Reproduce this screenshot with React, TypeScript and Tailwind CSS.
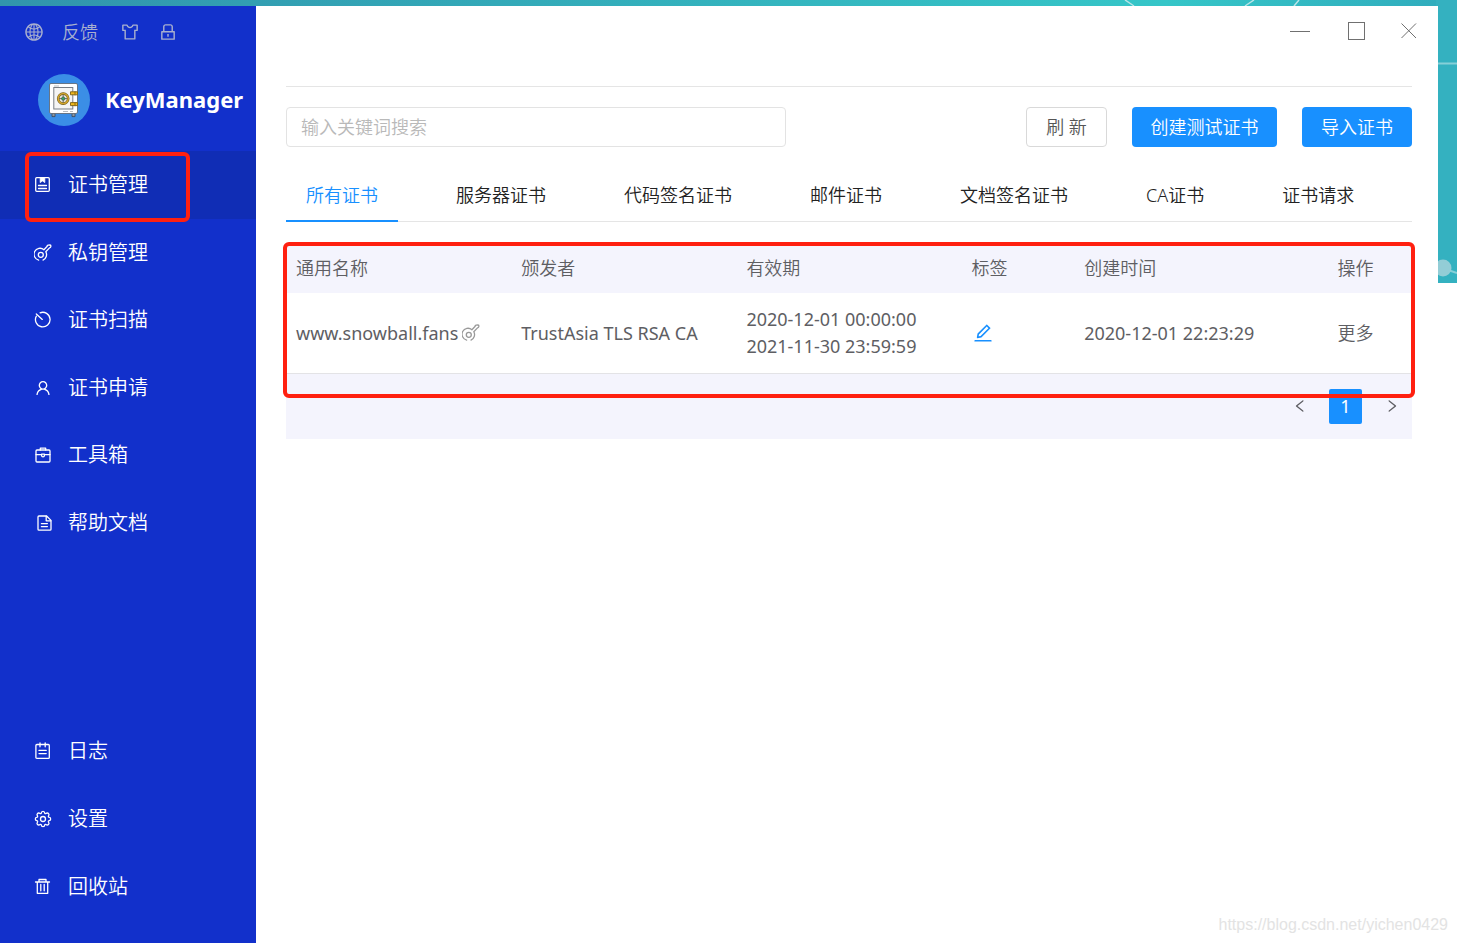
import React from "react";
import {
  AiOutlineEdit,
  AiOutlineGlobal,
  AiOutlineLeft,
  AiOutlineLock,
  AiOutlineRight,
  AiOutlineSkin,
  AiOutlineUser,
} from "react-icons/ai";

type IconProps = { className?: string };

function Svg({ className, children }: IconProps & { children: React.ReactNode }) {
  return (
    <svg
      viewBox="0 0 18 18"
      fill="none"
      stroke="currentColor"
      strokeWidth="1.3"
      strokeLinecap="round"
      strokeLinejoin="round"
      className={className}
      aria-hidden="true"
    >
      {children}
    </svg>
  );
}

function CertIcon({ className }: IconProps) {
  return (
    <Svg className={className}>
      <rect x="1.7" y="1.7" width="13.6" height="13.6" rx="1" />
      <path d="M6.2 2v4.6L8.5 4.9l2.3 1.7V2z" fill="currentColor" strokeWidth="0.8" />
      <path d="M4.5 9.5h8M4.5 12.5h8" />
    </Svg>
  );
}

function KeyIcon({ className }: IconProps) {
  return (
    <Svg className={className}>
      <path d="M4.6 16.1A6 6 0 1 1 9.900 5.700L13.200 2.300Q13 1.300 14.200 1.100L16 1Q17 1.100 16.900 2.300Q16.800 3.600 15.500 3.900L11.800 7.700A6 6 0 0 1 9 16.100" />
      <circle cx="6.800" cy="10.800" r="2.500" />
    </Svg>
  );
}

function ScanIcon({ className }: IconProps) {
  return (
    <Svg className={className}>
      <path d="M6.1 1.8A7.3 7.3 0 1 1 2.3 5.2" />
      <path d="M2.3 3L8.3 8.4" />
    </Svg>
  );
}

function ToolboxIcon({ className }: IconProps) {
  return (
    <Svg className={className}>
      <rect x="2" y="4" width="14" height="12" rx="1" />
      <path d="M6.3 4V2.2h5.4V4M2 8.6h5.6M10.4 8.6H16M7.6 8.2v1.2a1.4 1.4 0 0 0 2.8 0V8.2z" />
    </Svg>
  );
}

function DocIcon({ className }: IconProps) {
  return (
    <Svg className={className}>
      <path d="M5 2h7.6L17 6.4V15.200a1 1 0 0 1-1 1H5a1 1 0 0 1-1-1V3a1 1 0 0 1 1-1z" />
      <path d="M12.2 2.2V6.8H16.8M7.4 9.6h6M7.4 12.6h6" />
    </Svg>
  );
}

function LogIcon({ className }: IconProps) {
  return (
    <Svg className={className}>
      <rect x="1.9" y="2.500" width="13.4" height="13.900" rx="1" />
      <path d="M6 0.800v4M11.2 0.800v4M5 8.400h7.2M5 11.600h7.2" />
    </Svg>
  );
}

function GearIcon({ className }: IconProps) {
  return (
    <Svg className={className}>
      <path d="M7.200 3.300Q7.400 1.300 9 1.300T10.800 3.300Q11.100 3.800 11.800 3.600Q13.400 2.400 14.500 3.500T14.400 6.200Q14.200 6.900 14.700 7.200Q16.700 7.400 16.700 9T14.700 10.800Q14.200 11.100 14.400 11.800Q15.600 13.400 14.500 14.500T11.800 14.400Q11.100 14.200 10.800 14.700Q10.600 16.700 9 16.700T7.200 14.700Q6.900 14.200 6.200 14.400Q4.600 15.600 3.500 14.500T3.600 11.800Q3.800 11.100 3.300 10.800Q1.300 10.600 1.300 9T3.300 7.200Q3.800 6.900 3.600 6.200Q2.400 4.600 3.500 3.500T6.200 3.600Q6.900 3.800 7.200 3.300z" />
      <circle cx="9" cy="9" r="2.500" />
    </Svg>
  );
}

function TrashIcon({ className }: IconProps) {
  return (
    <Svg className={className}>
      <path d="M1.500 4h14M5 3.800V1.500h7v2.300M3.300 4.200V15.300h10.400V4.200M6.800 6.400v6.400M10.200 6.400v6.400" />
    </Svg>
  );
}

function SafeLogo() {
  return (
    <svg viewBox="0 0 52 52" className="size-[52px] shrink-0" aria-hidden="true">
      <circle cx="26" cy="26" r="26" fill="#3b8ee6" />
      <path d="M14 39h3v3.6h-3zM34 39h3v3.6h-3z" fill="#8b98a5" stroke="#3d4550" strokeWidth="0.8" />
      <rect x="11.5" y="9.5" width="28" height="30" rx="1.5" fill="#fff" stroke="#59616b" strokeWidth="0.8" />
      <rect x="15.8" y="13.5" width="19" height="21.5" fill="#f5f5f5" stroke="#777d84" strokeWidth="1" />
      <path d="M16 12h5M25 37.5h5M32 37.5h3" stroke="#b8bcc0" strokeWidth="1" />
      <circle cx="25.2" cy="24.6" r="5" fill="#e4e4dc" stroke="#6e5a1c" strokeWidth="2.6" />
      <circle cx="25.2" cy="24.6" r="5" fill="none" stroke="#d2a52e" strokeWidth="1.5" />
      <path d="M25.2 20.5v8.2M21 24.6h8.4" stroke="#65645b" strokeWidth="0.9" />
      <circle cx="25.2" cy="24.6" r="1.7" fill="#35a867" stroke="#39453c" strokeWidth="0.6" />
      <path
        d="M32.5 17.8h7v3h-7zM32.5 28.6h7v3h-7z"
        fill="#f0b91c"
        stroke="#7b6015"
        strokeWidth="0.9"
      />
      <path d="M37 17.2v4.2M37 28v4.2" stroke="#8d6d12" strokeWidth="1" />
    </svg>
  );
}

type Item = { label: string; icon: React.ComponentType<IconProps>; active?: boolean };

const mainItems: Item[] = [
  { label: "证书管理", icon: CertIcon, active: true },
  { label: "私钥管理", icon: KeyIcon },
  { label: "证书扫描", icon: ScanIcon },
  { label: "证书申请", icon: AiOutlineUser },
  { label: "工具箱", icon: ToolboxIcon },
  { label: "帮助文档", icon: DocIcon },
];

const footItems: Item[] = [
  { label: "日志", icon: LogIcon },
  { label: "设置", icon: GearIcon },
  { label: "回收站", icon: TrashIcon },
];

function NavItem({ label, icon: Icon, active }: Item) {
  return (
    <a
      href="#"
      className={
        "relative flex items-center gap-4 pt-px pl-[34px] text-xl font-[350] text-white " +
        (active ? "bg-[#102db5]" : "")
      }
    >
      <Icon className="size-[18px] shrink-0" />
      {label}
      {active && (
        <span className="pointer-events-none absolute top-px left-[25px] h-[70px] w-[165px] rounded-md border-4 border-[#ff2010]" />
      )}
    </a>
  );
}

function Sidebar() {
  return (
    <aside className="flex w-64 shrink-0 flex-col bg-[#1230cb]">
      <div className="flex h-[52px] items-center pl-6 text-lg font-[350] text-[#a9b0cf]">
        <button aria-label="语言" className="mr-[18px]">
          <AiOutlineGlobal className="size-5" />
        </button>
        <button className="mr-[22px]">反馈</button>
        <button aria-label="皮肤" className="mr-[18px]">
          <AiOutlineSkin className="size-5" />
        </button>
        <button aria-label="锁定">
          <AiOutlineLock className="size-5" />
        </button>
      </div>
      <div className="flex h-[93px] items-start gap-[15px] pt-4 pl-[38px]">
        <SafeLogo />
        <h1 className="text-[22px] leading-[50px] font-bold text-white">KeyManager</h1>
      </div>
      <nav className="grid h-[405px] auto-rows-fr">
        {mainItems.map((i) => (
          <NavItem key={i.label} {...i} />
        ))}
      </nav>
      <nav className="mt-auto mb-[23px] grid h-[203px] auto-rows-fr">
        {footItems.map((i) => (
          <NavItem key={i.label} {...i} />
        ))}
      </nav>
    </aside>
  );
}

const tabs = ["所有证书", "服务器证书", "代码签名证书", "邮件证书", "文档签名证书", "CA证书", "证书请求"];

function Backdrop() {
  return (
    <div className="absolute inset-x-0 top-0 h-[283px] bg-linear-to-r from-[#3194ac] via-[#35c6c8] via-80% to-[#30abbc]">
      <svg className="absolute top-0 right-0 h-[283px] w-[457px]" viewBox="0 0 457 283" aria-hidden="true">
        <rect x="436" width="21" height="283" fill="#34b1c0" />
        <path d="M125 0l9 6M254 0l-9 6M299 0l-5 6" stroke="#b9e4e7" strokeWidth="1.5" />
        <path d="M436 63.5H457M448 270l9 3" stroke="#86d0d8" strokeWidth="2" />
        <circle cx="443" cy="268" r="8.5" fill="#93cdd6" />
      </svg>
    </div>
  );
}

function WindowControls() {
  return (
    <div className="flex h-[50px] items-center justify-end gap-9 pr-5 text-[#707070]">
      <button aria-label="最小化">
        <svg viewBox="0 0 20 20" className="size-5" stroke="currentColor" fill="none">
          <path d="M0 10.5H20" />
        </svg>
      </button>
      <button aria-label="最大化">
        <svg viewBox="0 0 20 20" className="size-5" stroke="currentColor" fill="none">
          <rect x="2.5" y="1.5" width="16" height="17" />
        </svg>
      </button>
      <button aria-label="关闭" className="-ml-1">
        <svg viewBox="0 0 20 20" className="size-5" stroke="currentColor" fill="none">
          <path d="M3.5 2.5L18 17M18 2.5L3.5 17" />
        </svg>
      </button>
    </div>
  );
}

function CertTable() {
  return (
    <section className="relative mt-[23px] bg-[#f4f4fd] text-lg text-[#5e5e63]">
      <table className="w-full table-fixed text-left">
        <colgroup>
          <col className="w-[20%]" />
          <col className="w-[20%]" />
          <col className="w-[20%]" />
          <col className="w-[10%]" />
          <col className="w-[22.5%]" />
          <col className="w-[7.5%]" />
        </colgroup>
        <thead>
          <tr className="h-12">
            {["通用名称", "颁发者", "有效期", "标签", "创建时间", "操作"].map((h) => (
              <th key={h} className="px-2.5 pb-0.5 font-[350]">
                {h}
              </th>
            ))}
          </tr>
        </thead>
        <tbody>
          <tr className="h-20 border-b border-[#e3e3e6] bg-white whitespace-nowrap">
            <td className="pl-2.5">
              <span className="flex items-center gap-1">
                www.snowball.fans
                <KeyIcon className="size-[18px] text-[#999]" />
              </span>
            </td>
            <td className="pl-2.5">TrustAsia TLS RSA CA</td>
            <td className="pl-2.5 leading-[27px]">
              2020-12-01 00:00:00
              <br />
              2021-11-30 23:59:59
            </td>
            <td className="pl-2.5">
              <button aria-label="编辑标签" className="flex text-[#1890ff]">
                <AiOutlineEdit className="size-[22px]" />
              </button>
            </td>
            <td className="pl-2.5">2020-12-01 22:23:29</td>
            <td className="pl-2.5">
              <button className="font-[350]">更多</button>
            </td>
          </tr>
        </tbody>
      </table>
      <div className="flex h-[65px] items-start justify-end gap-[13px] pt-[15px] pr-1">
        <button aria-label="上一页" className="flex h-[35px] w-[33px] items-center justify-center">
          <AiOutlineLeft className="size-4" />
        </button>
        <button className="h-[35px] w-[33px] rounded-xs bg-[#1890ff] text-white">1</button>
        <button aria-label="下一页" className="flex h-[35px] w-[33px] items-center justify-center">
          <AiOutlineRight className="size-4" />
        </button>
      </div>
      <div className="pointer-events-none absolute -top-[3px] -right-[3px] -left-[3px] h-[156px] rounded-md border-4 border-[#ff2010]" />
    </section>
  );
}

export default function App() {
  return (
    <div className="relative flex min-h-screen bg-white pt-1.5 pr-[19px] font-['Noto_Sans','Noto_Sans_CJK_SC',sans-serif]">
      <Backdrop />
      <div className="relative flex grow bg-white">
        <Sidebar />
        <main className="min-w-0 grow">
          <WindowControls />
          <div className="mr-[26px] ml-[30px] pt-[30px]">
            <div className="flex items-center border-t border-[#e5e5e5] pt-5 text-lg font-[350]">
              <input
                type="search"
                aria-label="搜索"
                placeholder="输入关键词搜索"
                className="h-10 w-[500px] rounded border border-[#e3e3e3] px-3.5 placeholder:text-[#b9b9b9]"
              />
              <button className="ml-auto h-10 w-[81px] rounded border border-[#d9d9d9] text-[#555]">刷 新</button>
              <button className="ml-[25px] h-10 w-[145px] rounded bg-[#1890ff] text-white">创建测试证书</button>
              <button className="ml-[25px] h-10 w-[110px] rounded bg-[#1890ff] text-white">导入证书</button>
            </div>
            <div role="tablist" className="mt-[23px] flex gap-[38px] border-b border-[#e5e5e5] text-lg font-[350]">
              {tabs.map((t, i) => (
                <button
                  key={t}
                  role="tab"
                  aria-selected={i === 0}
                  className={
                    "-mb-px h-[52px] border-b-2 px-5 whitespace-nowrap " +
                    (i === 0 ? "border-[#1890ff] text-[#1890ff]" : "border-transparent text-[#222]")
                  }
                >
                  {t}
                </button>
              ))}
            </div>
            <CertTable />
          </div>
        </main>
      </div>
      <p className="absolute right-[9px] bottom-1.5 font-['Liberation_Sans',sans-serif] text-base text-[#e3e3e3]">
        https://blog.csdn.net/yichen0429
      </p>
    </div>
  );
}
